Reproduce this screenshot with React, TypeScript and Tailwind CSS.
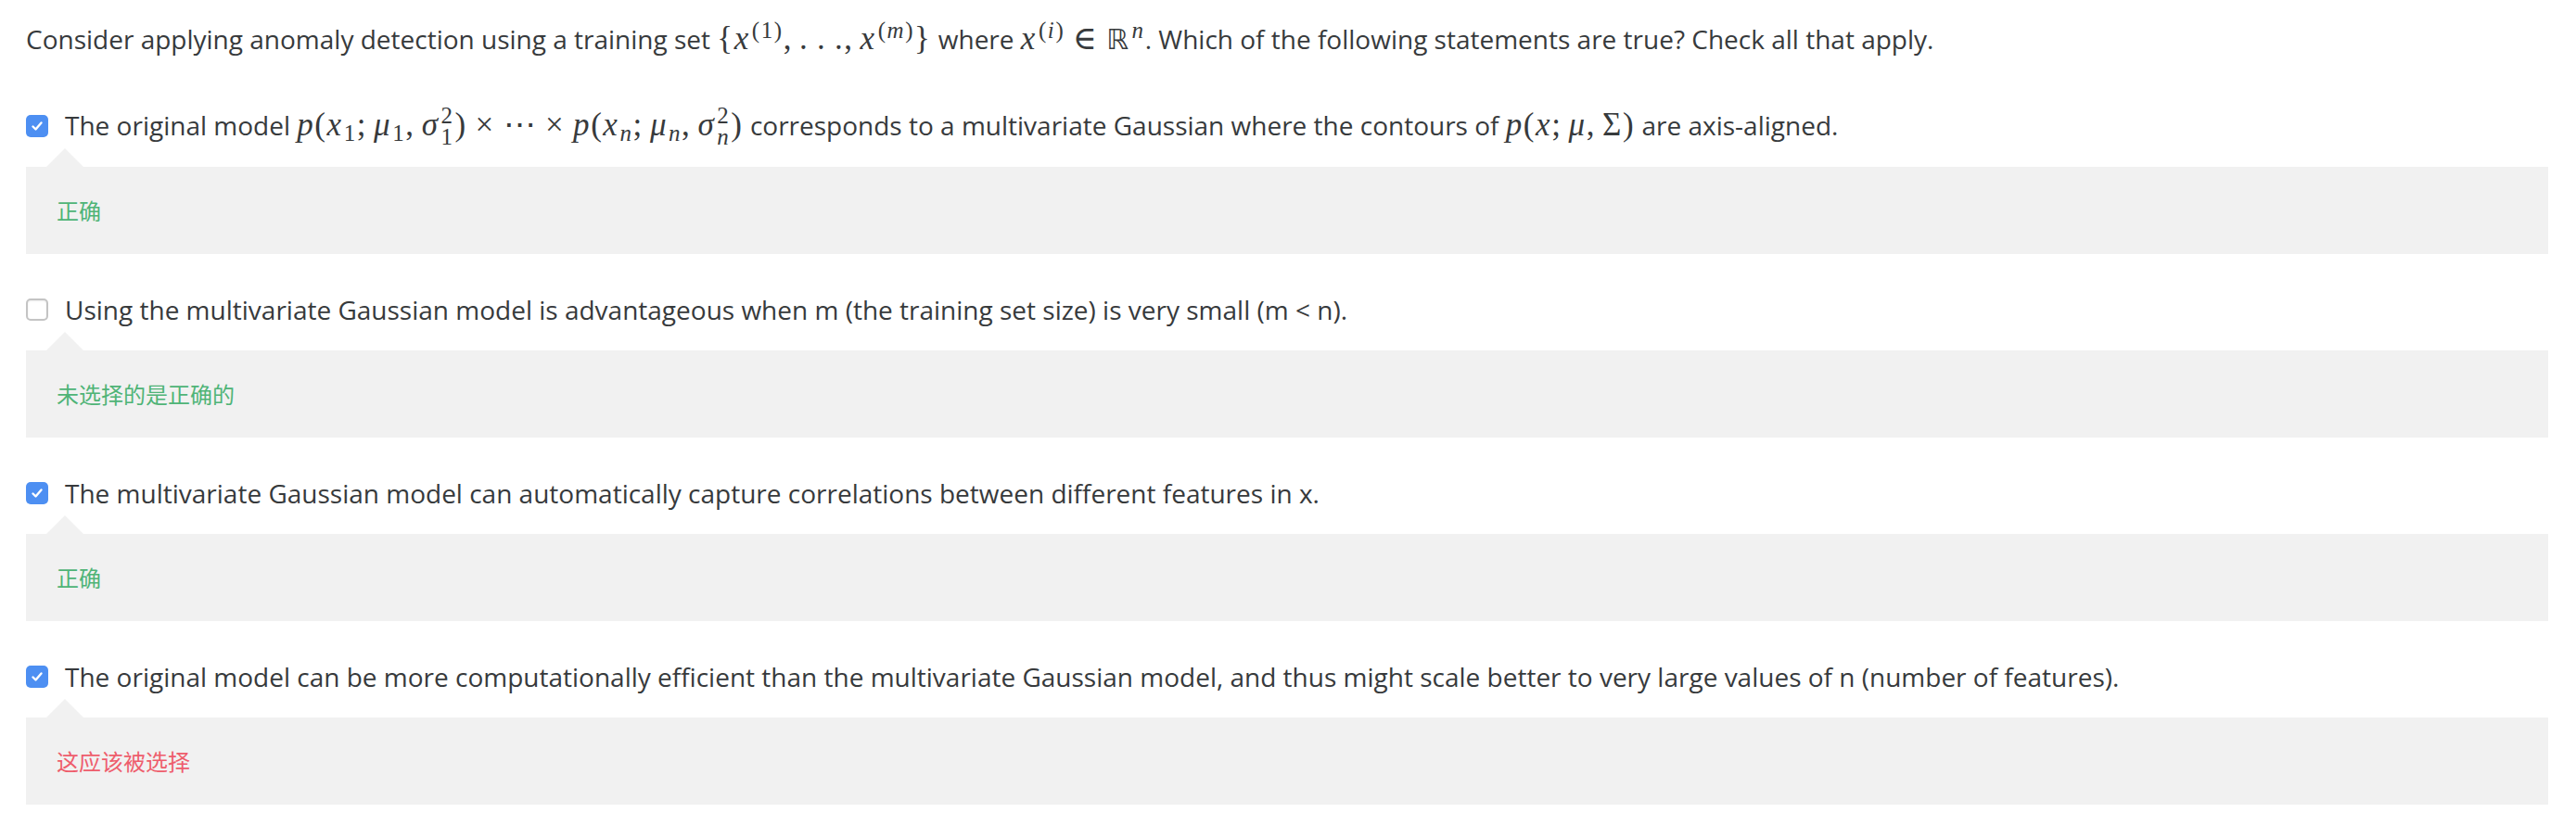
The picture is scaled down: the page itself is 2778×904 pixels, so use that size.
import React from "react";

function M({ children }: { children: React.ReactNode }) {
  return (
    <span className="font-['Liberation_Serif','DejaVu_Serif',serif] text-[35px] leading-none tracking-[0.045em]">
      {children}
    </span>
  );
}

function I({ children }: { children: React.ReactNode }) {
  return <i className="italic">{children}</i>;
}

// punctuation with KaTeX style thin space after it
function P({ c }: { c: string }) {
  return <span className="mr-[0.2em]">{c}</span>;
}

// binary operator / relation with spacing either side
function Op({ c }: { c: string }) {
  return <span className="mx-[0.25em]">{c}</span>;
}

function Sup({ children }: { children: React.ReactNode }) {
  return <sup className="text-[25px] ml-[2px]">{children}</sup>;
}

function Sub({ children }: { children: React.ReactNode }) {
  return <sub className="text-[25px] ml-[1px]">{children}</sub>;
}

function SupSub({ sup, sub }: { sup: React.ReactNode; sub: React.ReactNode }) {
  return (
    <span className="inline-flex flex-col align-[13px] text-[25px] leading-[23px] ml-[2px] mr-[1px]">
      <span>{sup}</span>
      <span>{sub}</span>
    </span>
  );
}

function Checkbox({ checked }: { checked: boolean }) {
  if (checked) {
    return (
      <span className="flex h-[24px] w-[24px] shrink-0 items-center justify-center rounded-[5px] bg-[#4d8ff2]">
        <svg width="16" height="16" viewBox="0 0 16 16" fill="none">
          <path d="M3.5 8.5 L6.5 11.5 L12.5 4.5" stroke="white" strokeWidth="2.4" strokeLinecap="round" strokeLinejoin="round" />
        </svg>
      </span>
    );
  }
  return (
    <span className="h-[24px] w-[24px] shrink-0 rounded-[5px] border-2 border-[#c4c4c4] bg-white shadow-[inset_0_1px_2px_rgba(0,0,0,0.08)]" />
  );
}

type Option = {
  checked: boolean;
  text: React.ReactNode;
  feedback: string;
  ok: boolean;
};

const options: Option[] = [
  {
    checked: true,
    text: (
      <>
        The original model{" "}
        <M>
          <I>p</I>(<I>x</I>
          <Sub>1</Sub>
          <P c=";" />
          <I>μ</I>
          <Sub>1</Sub>
          <P c="," />
          <I>σ</I>
          <SupSub sup="2" sub="1" />)<Op c="×" />⋯<Op c="×" />
          <I>p</I>(<I>x</I>
          <Sub>
            <I>n</I>
          </Sub>
          <P c=";" />
          <I>μ</I>
          <Sub>
            <I>n</I>
          </Sub>
          <P c="," />
          <I>σ</I>
          <SupSub sup="2" sub={<I>n</I>} />)
        </M>{" "}
        corresponds to a multivariate Gaussian where the contours of{" "}
        <M>
          <I>p</I>(<I>x</I>
          <P c=";" />
          <I>μ</I>
          <P c="," />Σ)
        </M>{" "}
        are axis-aligned.
      </>
    ),
    feedback: "正确",
    ok: true,
  },
  {
    checked: false,
    text: "Using the multivariate Gaussian model is advantageous when m (the training set size) is very small (m < n).",
    feedback: "未选择的是正确的",
    ok: true,
  },
  {
    checked: true,
    text: "The multivariate Gaussian model can automatically capture correlations between different features in x.",
    feedback: "正确",
    ok: true,
  },
  {
    checked: true,
    text: "The original model can be more computationally efficient than the multivariate Gaussian model, and thus might scale better to very large values of n (number of features).",
    feedback: "这应该被选择",
    ok: false,
  },
];

export default function App() {
  return (
    <div className="min-h-screen bg-white pl-[28px] pr-[30px] pt-[21px] font-['Open_Sans','Noto_Sans_CJK_SC',sans-serif] text-[28px] text-[#373a3c]">
      <p className="leading-[42px] whitespace-nowrap">
        Consider applying anomaly detection using a training set{" "}
        <M>
          {"{"}
          <I>x</I>
          <Sup>(1)</Sup>
          <P c="," />
          .&thinsp;.&thinsp;.
          <P c="," />
          <I>x</I>
          <Sup>
            (<I>m</I>)
          </Sup>
          {"}"}
        </M>{" "}
        where{" "}
        <M>
          <I>x</I>
          <Sup>
            (<I>i</I>)
          </Sup>
          <Op c="∈" />
          <span className="font-['DejaVu_Sans',sans-serif] text-[30px]">ℝ</span>
          <Sup>
            <I>n</I>
          </Sup>
        </M>
        . Which of the following statements are true? Check all that apply.
      </p>

      <div className="mt-[52px] flex flex-col gap-[39px]">
        {options.map((o, i) => (
          <div key={i}>
            <div className="flex h-[42px] items-center gap-[18px] whitespace-nowrap">
              <Checkbox checked={o.checked} />
              <span className="leading-[42px]">{o.text}</span>
            </div>
            <div className="mt-[3px]">
              <div className="ml-[22px] h-0 w-0 border-x-[20px] border-b-[20px] border-x-transparent border-b-[#f1f1f1]" />
              <div
                className={
                  o.ok
                    ? "flex h-[94px] items-center bg-[#f1f1f1] pl-[33px] font-['Noto_Sans_CJK_SC',sans-serif] text-[24px] text-[#4fb477]"
                    : "flex h-[94px] items-center bg-[#f1f1f1] pl-[33px] font-['Noto_Sans_CJK_SC',sans-serif] text-[24px] text-[#ee5d6c]"
                }
              >
                {o.feedback}
              </div>
            </div>
          </div>
        ))}
      </div>
    </div>
  );
}
